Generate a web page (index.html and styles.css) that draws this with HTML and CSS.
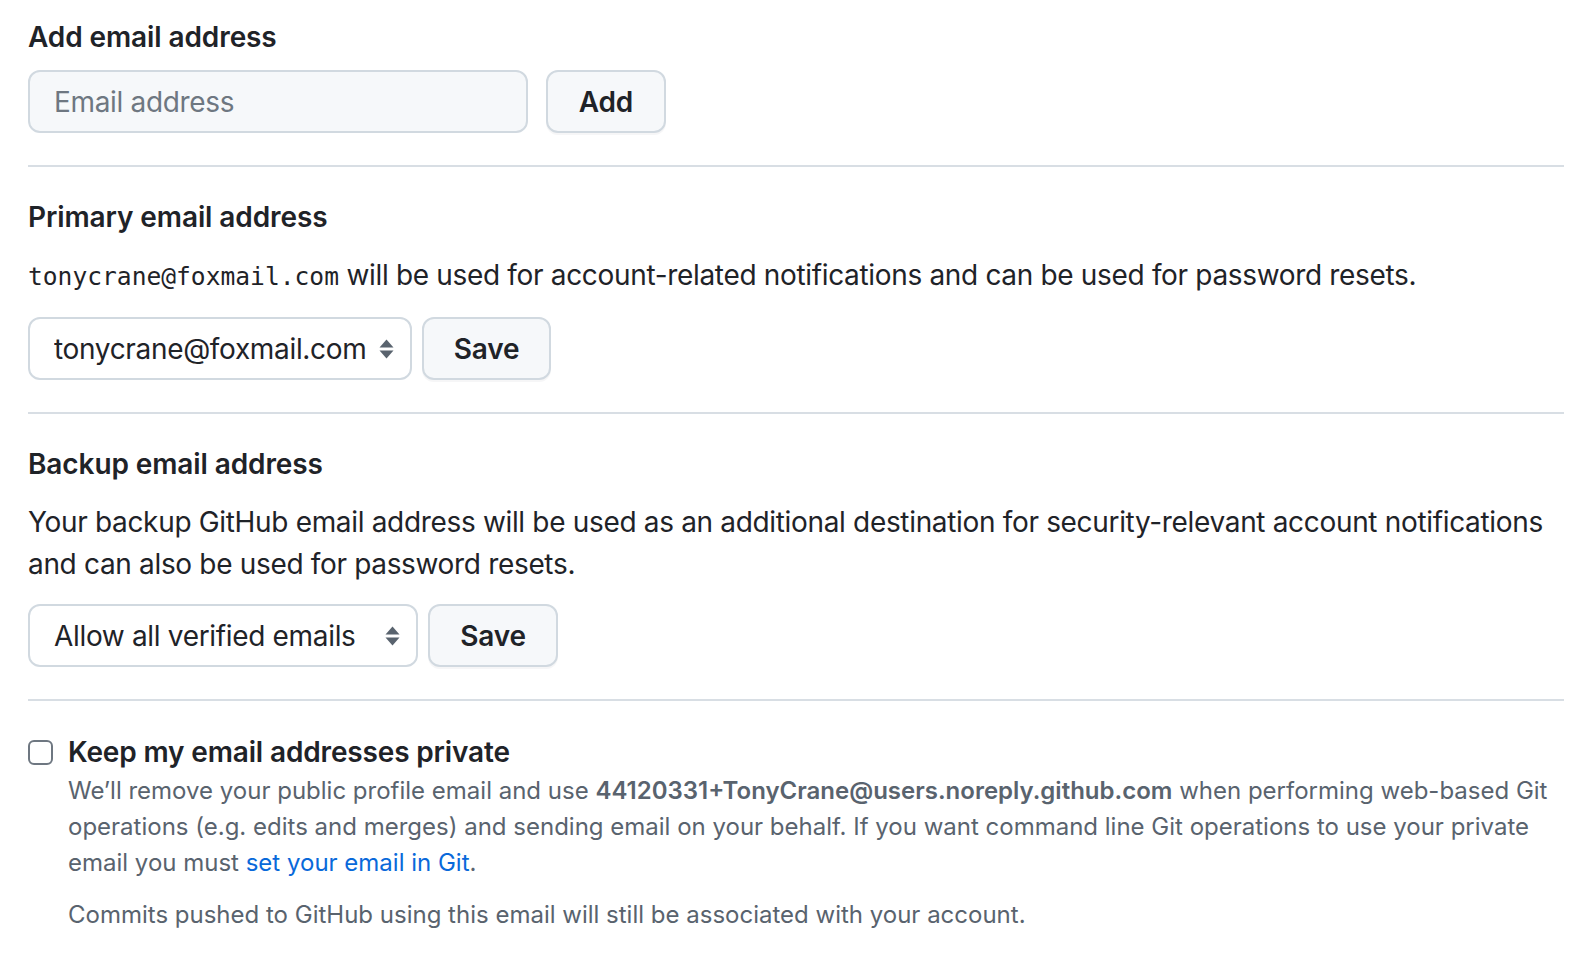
FILE: index.html
```html
<!DOCTYPE html>
<html lang="en">
<head>
<meta charset="utf-8">
<title>Emails</title>
<link rel="stylesheet" href="styles.css">
</head>
<body>
<main class="page">
  <section class="block">
    <h2 class="heading">Add email address</h2>
    <form class="row row-wide">
      <input class="text-input" type="email" placeholder="Email address">
      <button class="btn btn-add" type="button">Add</button>
    </form>
  </section>
  <hr class="divider">
  <section class="block">
    <h2 class="heading">Primary email address</h2>
    <p class="desc"><code class="mono">tonycrane@foxmail.com</code> will be used for account-related notifications and can be used for password resets.</p>
    <form class="row">
      <div class="select-wrap select-primary">
        <select class="select"><option>tonycrane@foxmail.com</option></select>
        <svg class="select-caret" width="15" height="20" viewBox="0 0 15 20" aria-hidden="true"><path d="M7.5 0.5 L14.5 8.5 H0.5 Z M7.5 19.5 L14.5 11.5 H0.5 Z" fill="#59636e"/></svg>
      </div>
      <button class="btn btn-save" type="button">Save</button>
    </form>
  </section>
  <hr class="divider">
  <section class="block">
    <h2 class="heading">Backup email address</h2>
    <p class="desc">Your backup GitHub email address will be used as an additional destination for security-relevant account notifications and can also be used for password resets.</p>
    <form class="row">
      <div class="select-wrap select-backup">
        <select class="select"><option>Allow all verified emails</option></select>
        <svg class="select-caret" width="15" height="20" viewBox="0 0 15 20" aria-hidden="true"><path d="M7.5 0.5 L14.5 8.5 H0.5 Z M7.5 19.5 L14.5 11.5 H0.5 Z" fill="#59636e"/></svg>
      </div>
      <button class="btn btn-save btn-save-wide" type="button">Save</button>
    </form>
  </section>
  <hr class="divider">
  <section class="block check-block">
    <input class="checkbox" type="checkbox" id="private">
    <div class="check-body">
      <label class="check-label" for="private">Keep my email addresses private</label>
      <p class="note">We’ll remove your public profile email and use <strong>44120331+TonyCrane@users.noreply.github.com</strong> when performing web-based Git operations (e.g. edits and merges) and sending email on your behalf. If you want command line Git operations to use your private email you must <a class="link" href="#">set your email in Git</a>.</p>
      <p class="note note-last">Commits pushed to GitHub using this email will still be associated with your account.</p>
    </div>
  </section>
</main>
</body>
</html>
```

FILE: styles.css
```css
* { box-sizing: border-box; }
html, body { margin: 0; padding: 0; background: #ffffff; }
body {
  font-family: Inter, "Noto Sans", "Liberation Sans", sans-serif;
  color: #1f2328;
  font-size: 28px;
  line-height: 42px;
  letter-spacing: -0.33px;
}
.page {
  padding: 16px 12px 0 28px;
}
.block { margin: 0; }
.heading {
  margin: 0;
  font-size: 28px;
  line-height: 42px;
  font-weight: 600;
  letter-spacing: -0.1px;
}
.row {
  display: flex;
  align-items: stretch;
  gap: 10px;
  margin: 19px 0 0;
}
.row-wide { gap: 18px; margin-top: 12px; }
.text-input {
  width: 500px;
  height: 63px;
  border: 2px solid #d1d9e0;
  border-radius: 12px;
  background: #f6f8fa;
  padding: 0 24px;
  font: inherit;
  font-size: 28px;
  letter-spacing: -0.33px;
  color: #1f2328;
  outline: none;
}
.text-input::placeholder { color: #6e7781; }
.btn {
  height: 63px;
  border: 2px solid #d1d9e0;
  border-radius: 12px;
  background: #f6f8fa;
  font: inherit;
  font-size: 28px;
  font-weight: 600;
  letter-spacing: -0.2px;
  color: #1f2328;
  box-shadow: 0 2px 0 rgba(31, 35, 40, 0.04);
  padding: 0;
}
.btn-add { width: 120px; }
.btn-save { width: 129px; }
.btn-save-wide { width: 130px; }
.divider {
  border: 0;
  height: 2px;
  background: #d8dee4;
  margin: 32px 0 29px;
}
.desc {
  margin: 16px 0 0;
}
.mono {
  font-family: "DejaVu Sans Mono", "Liberation Mono", monospace;
  font-size: 24.6px;
  letter-spacing: 0;
}
.select-wrap {
  position: relative;
  height: 63px;
}
.select-primary { width: 384px; }
.select-backup { width: 390px; }
.select {
  appearance: none;
  -webkit-appearance: none;
  width: 100%;
  height: 100%;
  border: 2px solid #d1d9e0;
  border-radius: 12px;
  background: #ffffff;
  padding: 0 40px 0 24px;
  font: inherit;
  font-size: 28px;
  letter-spacing: -0.33px;
  color: #1f2328;
}
.select-caret {
  position: absolute;
  right: 18px;
  top: 22px;
}
.check-block {
  display: flex;
  align-items: flex-start;
  gap: 15px;
  padding-top: 1px;
}
.checkbox {
  appearance: none;
  -webkit-appearance: none;
  margin: 9px 0 0;
  width: 25px;
  height: 25px;
  border: 2px solid #6e7781;
  border-radius: 6px;
  background: #ffffff;
  flex: none;
}
.check-body { flex: 1; }
.check-label {
  display: block;
  font-weight: 600;
  font-size: 28px;
  line-height: 42px;
  letter-spacing: -0.15px;
}
.note {
  margin: 0;
  font-size: 24px;
  line-height: 36px;
  letter-spacing: 0;
  color: #59636e;
}
.note strong { font-weight: 600; }
.note-last { margin-top: 16px; }
.link { color: #0969da; text-decoration: none; }
```
